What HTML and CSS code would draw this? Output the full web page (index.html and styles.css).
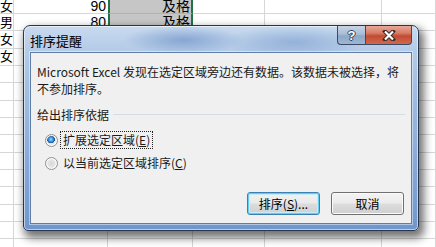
FILE: index.html
```html
<!DOCTYPE html>
<html lang="zh-CN">
<head>
<meta charset="utf-8">
<title>排序提醒</title>
<link rel="stylesheet" href="styles.css">
</head>
<body>
<div class="sheet">
  <div class="c a">女</div><div class="c b nb">90</div><div class="c s">及格</div><div class="c"></div><div class="c"></div><div class="c"></div>
  <div class="c a">男</div><div class="c b nb">80</div><div class="c s">及格</div><div class="c"></div><div class="c"></div><div class="c"></div>
  <div class="c a">女</div><div class="c b nb"></div><div class="c s"></div><div class="c"></div><div class="c"></div><div class="c"></div>
  <div class="c a">女</div><div class="c b nb"></div><div class="c s"></div><div class="c"></div><div class="c"></div><div class="c"></div>
  <div class="c a"></div><div class="c b nb"></div><div class="c s"></div><div class="c"></div><div class="c"></div><div class="c"></div>
  <div class="c a"></div><div class="c b nb"></div><div class="c s"></div><div class="c"></div><div class="c"></div><div class="c"></div>
  <div class="c a"></div><div class="c b nb"></div><div class="c s"></div><div class="c"></div><div class="c"></div><div class="c"></div>
  <div class="c a"></div><div class="c b nb"></div><div class="c s"></div><div class="c"></div><div class="c"></div><div class="c"></div>
  <div class="c a"></div><div class="c b nb"></div><div class="c s"></div><div class="c"></div><div class="c"></div><div class="c"></div>
  <div class="c a"></div><div class="c b nb"></div><div class="c s"></div><div class="c"></div><div class="c"></div><div class="c"></div>
  <div class="c a"></div><div class="c b"></div><div class="c"></div><div class="c"></div><div class="c"></div><div class="c"></div>
  <div class="c a"></div><div class="c b"></div><div class="c"></div><div class="c"></div><div class="c"></div><div class="c"></div>
  <div class="c a"></div><div class="c b"></div><div class="c"></div><div class="c"></div><div class="c"></div><div class="c"></div>
  <div class="c a"></div><div class="c b"></div><div class="c"></div><div class="c"></div><div class="c"></div><div class="c"></div>
  <div class="c a"></div><div class="c b"></div><div class="c"></div><div class="c"></div><div class="c"></div><div class="c"></div>
</div>

<div class="dialog">
  <div class="titlebar">
    <span class="title">排序提醒</span>
    <div class="caps">
      <div class="cap help">?</div>
      <div class="cap close">
        <svg width="14" height="11" viewBox="0 0 14 11"><path d="M3 1.5 L11 9.5 M11 1.5 L3 9.5" stroke="#3a2a2a" stroke-width="4" stroke-linecap="square" fill="none"/><path d="M3 1.5 L11 9.5 M11 1.5 L3 9.5" stroke="#fff" stroke-width="2.2" fill="none"/></svg>
      </div>
    </div>
  </div>
  <div class="client">
    <p class="msg">Microsoft Excel 发现在选定区域旁边还有数据。该数据未被选择，将<br>不参加排序。</p>
    <div class="group"><span class="glabel">给出排序依据</span><span class="gline"></span></div>
    <div class="radio r1"><span class="dot on"></span><span class="lbl focus">扩展选定区域(<u>E</u>)</span></div>
    <div class="radio r2"><span class="dot"></span><span class="lbl">以当前选定区域排序(<u>C</u>)</span></div>
    <div class="buttons">
      <div class="btn def">排序(<u>S</u>)...</div>
      <div class="btn">取消</div>
    </div>
  </div>
</div>
</body>
</html>
```

FILE: styles.css
```css
* { box-sizing: border-box; margin: 0; padding: 0; }
html, body { width: 436px; height: 247px; overflow: hidden; background: #fff; }
body { position: relative; font-family: "Noto Sans CJK SC", sans-serif; }

.sheet {
  display: grid;
  grid-template-columns: 14px 94px 85px 72px 117px 54px;
  grid-template-rows: 14px;
  grid-auto-rows: 17.33px;
  font: 14px/13px "Liberation Sans", "Noto Sans CJK SC", sans-serif;
  color: #000;
}
.c {
  border-right: 1px solid #d6d6d6;
  border-bottom: 1px solid #d6d6d6;
  display: flex;
  align-items: center;
  justify-content: flex-end;
  white-space: nowrap;
  padding-right: 2px;
}
.c.a { justify-content: flex-start; padding: 0; font-size: 13px; }
.c.nb { border-right: none; }
.c.s {
  background: #c6c6c6;
  border-left: 2px solid #217346;
  border-right: 2px solid #217346;
  border-bottom-color: #b2b2b2;
  padding-right: 1px;
}

.dialog {
  position: absolute;
  left: 23px;
  top: 25px;
  width: 396px;
  height: 206px;
  border: 1px solid #27364d;
  border-radius: 7px 7px 5px 5px;
  padding: 0 6px 6px 6px;
  display: flex;
  flex-direction: column;
  background:
    radial-gradient(ellipse 60px 14px at 160px 14px, rgba(90,130,190,.55), rgba(90,130,190,0)),
    radial-gradient(ellipse 70px 16px at 270px 16px, rgba(100,140,195,.45), rgba(100,140,195,0)),
    linear-gradient(180deg, #c8daef 0, #b6cce8 22px, #a3bfe3 60px, #86a8d8 140px, #6f96cd 205px);
  box-shadow: inset 0 0 0 1px rgba(255,255,255,.55), 3px 5px 9px 2px rgba(0,0,0,.55);
}
.titlebar {
  height: 26px;
  position: relative;
  display: flex;
  align-items: center;
  padding-top: 4px;
}
.title { font-size: 13px; line-height: 16px; color: #000; }
.caps { position: absolute; right: 0; top: 0; display: flex; }
.cap {
  height: 19px;
  border: 1px solid #3a4a64;
  border-top: none;
  display: flex;
  align-items: center;
  justify-content: center;
}
.help {
  width: 28px;
  border-right: none;
  border-radius: 0 0 0 4px;
  background: linear-gradient(180deg, #c6d4e6 0, #a9bdd7 45%, #8ea7c8 55%, #9fb6d3 100%);
  font: bold 13px/1 "Liberation Sans", sans-serif;
  color: #fff;
  text-shadow: 1px 0 0 #33425a, -1px 0 0 #33425a, 0 1px 0 #33425a, 0 -1px 0 #33425a;
}
.close {
  width: 47px;
  border-radius: 0 0 4px 0;
  background: linear-gradient(180deg, #e8a898 0, #d77b66 40%, #c44a32 55%, #cf6a4e 100%);
}

.client {
  flex: 1;
  background: #f0f0f0;
  border: 1px solid #5f7fa9;
  box-shadow: 0 0 0 1px rgba(255,255,255,.45);
  padding: 10px 6px 8px 6px;
  display: flex;
  flex-direction: column;
  font-size: 12px;
  color: #1a1a1a;
}
.msg { line-height: 17px; white-space: nowrap; }
.group {
  margin-top: 9px;
  height: 17px;
  display: flex;
  align-items: center;
}
.glabel { line-height: 17px; }
.gline { flex: 1; height: 1px; background: #d3dde6; margin-left: 4px; }
.radio {
  height: 18px;
  display: flex;
  align-items: center;
  padding-left: 8px;
}
.r1 { margin-top: 8px; }
.r2 { margin-top: 5px; }
.dot {
  width: 13px;
  height: 13px;
  border-radius: 50%;
  border: 1px solid #8f8f8f;
  background: radial-gradient(circle at 50% 50%, #d8d8d8 0, #e6e6e6 45%, #f6f6f6 100%);
  box-shadow: inset 0 0 0 1px #fdfdfd;
}
.dot.on {
  background:
    radial-gradient(circle at 45% 40%, #9fd8ff 0, #3d8fd8 25%, #14548f 42%, rgba(20,84,143,0) 46%),
    radial-gradient(circle at 50% 50%, #d8d8d8 0, #e6e6e6 45%, #f6f6f6 100%);
}
.lbl { margin-left: 3px; padding: 0 2px; line-height: 16px; }
.lbl.focus { outline: 1px dotted #222; outline-offset: 0; }

.buttons {
  margin-top: auto;
  display: flex;
  justify-content: flex-end;
  gap: 11px;
  padding-right: 1px;
}
.btn {
  width: 73px;
  height: 23px;
  border: 1px solid #707070;
  border-radius: 3px;
  background: linear-gradient(180deg, #f3f3f3 0, #ebebeb 48%, #dddddd 52%, #cfcfcf 100%);
  box-shadow: inset 0 0 0 1px #fbfbfb;
  display: flex;
  align-items: center;
  justify-content: center;
  font-size: 12px;
  color: #000;
}
.btn.def {
  border-color: #3c7fb1;
  box-shadow: inset 0 0 0 1px #5fd0f3, inset 0 0 0 2px #c4ecfa;
  background: linear-gradient(180deg, #f2f2f2 0, #eaeaea 48%, #dcdcdc 52%, #d0d0d0 100%);
}
u { text-decoration: underline; text-underline-offset: 1px; }
```
